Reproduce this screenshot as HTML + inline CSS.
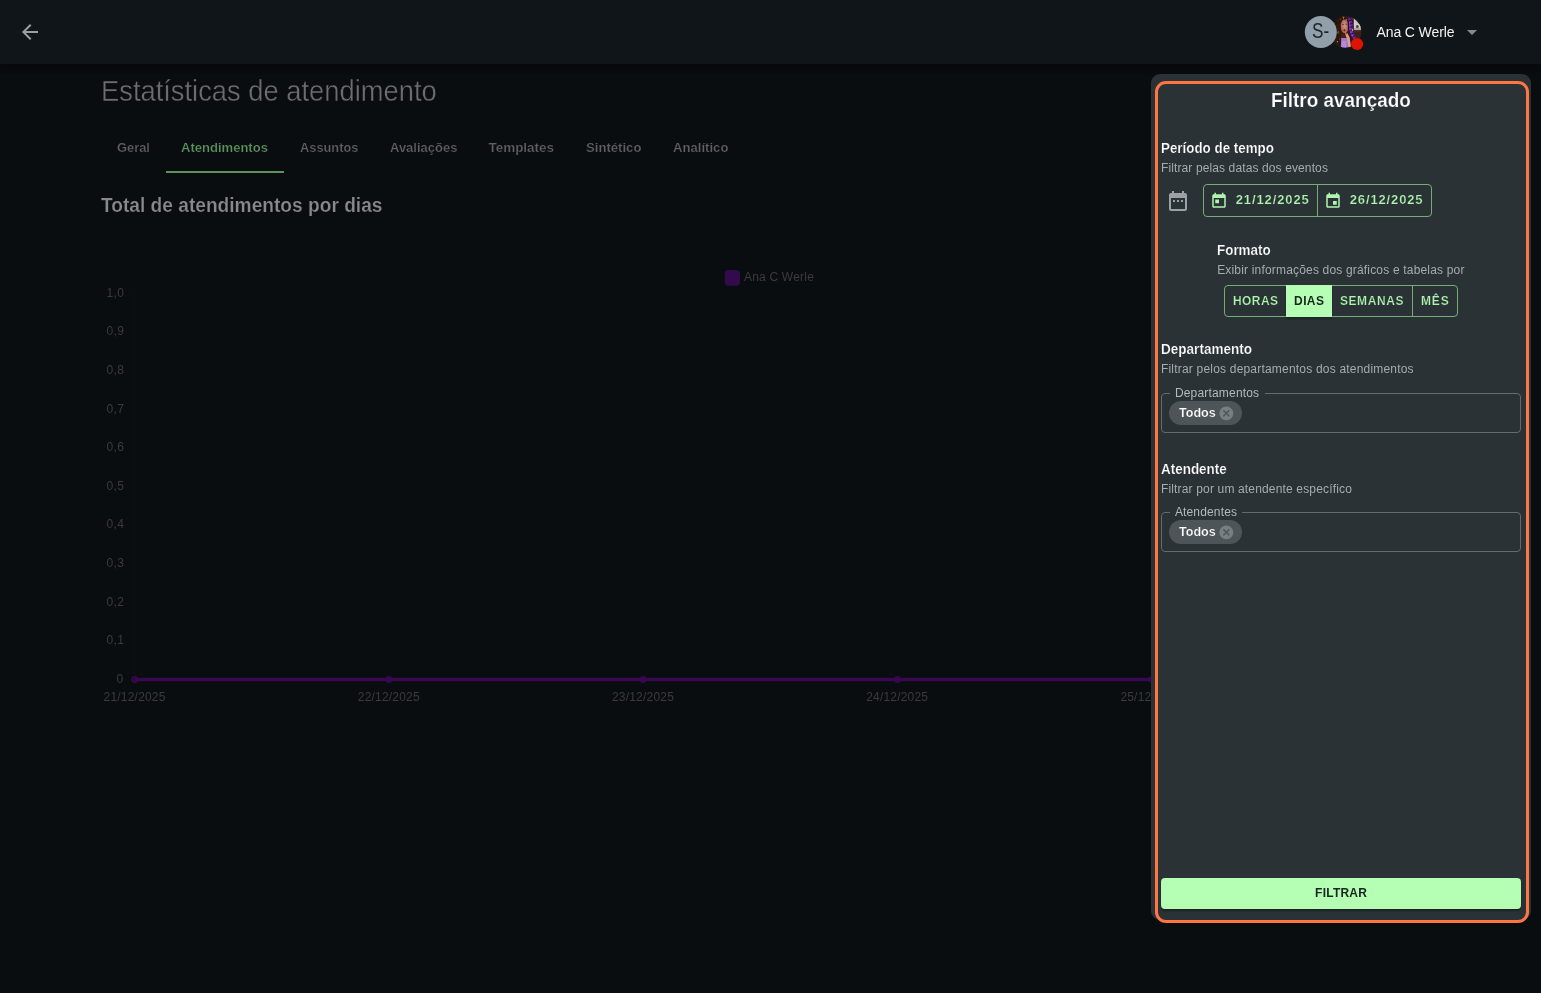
<!DOCTYPE html>
<html lang="pt-BR"><head><meta charset="utf-8"><title>Estatísticas de atendimento</title>
<style>
html,body{margin:0;padding:0}
body{width:1541px;height:993px;overflow:hidden;background:#0a0d10;font-family:"Liberation Sans", sans-serif;position:relative}
.abs{position:absolute}
.lay{left:0;top:0;width:1541px;height:993px;will-change:transform}
.t{position:absolute;white-space:nowrap;line-height:1;transform-origin:0 0}
.topbar{left:0;top:0;width:1541px;height:64px;background:#10151a;box-shadow:0 2px 4px -1px rgba(0,0,0,.2),0 4px 5px 0 rgba(0,0,0,.14),0 1px 10px 0 rgba(0,0,0,.12)}
.card{left:1151px;top:74px;width:380px;height:846px;background:#2a3236;border-radius:9px}
.ring{left:1155px;top:81px;width:368px;height:836px;border:3px solid #ff7643;border-radius:11px}
.grp{border:1px solid #74ad76;border-radius:4px;box-sizing:border-box}
.div{background:#74ad76;width:1px}
.field{border:1px solid #646b6e;border-radius:4px;box-sizing:border-box}
.gap{background:#2a3236;height:3px}
.chip{background:#4e5558;border-radius:12px;height:24px;width:73px}
.btn{left:1161px;top:878px;width:360px;height:31px;background:#b4ffb4;border-radius:4px;box-shadow:0 2px 2px rgba(0,0,0,.35)}
</style></head><body>
<div class="abs topbar"></div>
<svg class="abs" style="left:18px;top:20px" width="24" height="24" viewBox="0 0 24 24"><path fill="#9b9fa1" d="M20 11H7.83l5.59-5.59L12 4l-8 8 8 8 1.41-1.41L7.83 13H20v-2z"/></svg>
<!-- avatars -->
<svg class="abs" style="left:1300px;top:12px" width="70" height="42" viewBox="0 0 70 42">
<defs><clipPath id="av"><circle cx="45.600" cy="19.900" r="15.600"/></clipPath>
<radialGradient id="face" cx="0.5" cy="0.45" r="0.5"><stop offset="0" stop-color="#d0958a"/><stop offset="1" stop-color="#a86150"/></radialGradient></defs>
<g clip-path="url(#av)">
<rect x="30" y="4" width="32" height="32" fill="#3b2216"/>
<rect x="50.8" y="4" width="2.8" height="15" fill="#5e321f"/>
<rect x="53.8" y="6" width="9" height="12.2" fill="#a9a6a3"/>
<path d="M54 7l4 5 3-1 1 5h-8z" fill="#cfcdca"/>
<circle cx="57.3" cy="14.6" r="1.5" fill="#4d4844"/>
<rect x="53.8" y="18.2" width="9" height="8" fill="#3a2119"/>
<rect x="53.8" y="18.2" width="9" height="1.2" fill="#5a3322"/>
<rect x="52" y="26" width="11" height="10" fill="#2a1712"/>
<path d="M30 36V10c3-4 8-6.500 13-6.500 5 0 8 1.500 10 5l1 18-3 9.500z" fill="#2e190f"/>
<ellipse cx="44.700" cy="14.300" rx="3.900" ry="7" fill="url(#face)"/>
<path d="M41.500 21.200l5.800.5.500 4.600h-6.800z" fill="#4a2015"/>
<path d="M41.200 26h6.700l.400 10.500h-7.600z" fill="#a376cd"/>
<path d="M42 29h4v7.500h-4.500z" fill="#b58ad8"/>
<path d="M47.600 5.500c2.800 2 3.800 6 3.600 10.500s1.600 8 3.600 10.500" stroke="#6a1fb4" stroke-width="3.200" fill="none"/>
<path d="M48.600 8c1.600 3 1.200 7 1.600 10s2 6 3.600 8" stroke="#a04cf0" stroke-width="1.100" fill="none"/>
<path d="M47.300 6.500c1.500 3 1 8 1.200 11" stroke="#1c0d12" stroke-width="1.200" fill="none"/>
<path d="M47.600 5.500c2.800 2 3.800 6 3.600 10.500s1.600 8 3.600 10.500" stroke="#1c0d12" stroke-width="3.200" stroke-dasharray="1.200 2.100" fill="none" opacity=".75"/>
<circle cx="52.500" cy="18" r=".8" fill="#f0d8f5"/>
<path d="M44.700 20.600l2.600.3 2.400 4.600 1.500 11h-2.700l-1.300-9z" fill="#d79d8f"/>
<circle cx="44.400" cy="18.300" r="1" fill="#8c0f1a"/>
<circle cx="46.200" cy="21.800" r=".7" fill="#b3121f"/>
<path d="M42.300 12.500h1.600M45.500 12.300h1.600" stroke="#4a2a2a" stroke-width=".8"/>
<path d="M38 4.500c-3 .5-5.500 2-7 4.500" stroke="#d79a50" stroke-width="1.200" fill="none"/>
<circle cx="35.4" cy="10.5" r="0.52" fill="#6b3d22"/><circle cx="39.9" cy="8.8" r="0.53" fill="#160b08"/><circle cx="37.1" cy="7.1" r="0.69" fill="#160b08"/><circle cx="34.7" cy="22.5" r="0.87" fill="#b9753f"/><circle cx="33.6" cy="12.7" r="0.76" fill="#6b3d22"/><circle cx="33.1" cy="23.6" r="0.94" fill="#b9753f"/><circle cx="32.9" cy="31.8" r="0.69" fill="#d59a5c"/><circle cx="37.4" cy="23.1" r="0.87" fill="#160b08"/><circle cx="34.1" cy="23.4" r="0.58" fill="#6b3d22"/><circle cx="33.4" cy="27.4" r="0.53" fill="#160b08"/><circle cx="34.4" cy="26.4" r="0.85" fill="#160b08"/><circle cx="36.7" cy="33.7" r="0.63" fill="#d59a5c"/><circle cx="39.6" cy="27.0" r="0.54" fill="#8a5230"/><circle cx="35.2" cy="20.9" r="0.83" fill="#d59a5c"/><circle cx="35.1" cy="35.4" r="0.73" fill="#b9753f"/><circle cx="34.0" cy="16.3" r="0.69" fill="#160b08"/><circle cx="37.5" cy="29.7" r="0.65" fill="#d59a5c"/><circle cx="35.7" cy="20.9" r="0.53" fill="#160b08"/><circle cx="33.3" cy="14.1" r="0.80" fill="#6b3d22"/><circle cx="33.0" cy="27.0" r="0.76" fill="#6b3d22"/><circle cx="38.6" cy="19.4" r="0.67" fill="#6b3d22"/><circle cx="38.5" cy="6.7" r="0.66" fill="#160b08"/><circle cx="38.0" cy="20.8" r="0.85" fill="#8a5230"/><circle cx="33.7" cy="13.4" r="0.91" fill="#160b08"/><circle cx="37.0" cy="11.0" r="0.75" fill="#160b08"/><circle cx="40.5" cy="30.6" r="0.63" fill="#160b08"/><circle cx="36.2" cy="16.8" r="0.93" fill="#160b08"/><circle cx="33.9" cy="11.3" r="0.80" fill="#8a5230"/><circle cx="32.6" cy="30.9" r="0.62" fill="#8a5230"/><circle cx="32.5" cy="18.6" r="0.77" fill="#d59a5c"/><circle cx="35.4" cy="9.8" r="0.93" fill="#160b08"/><circle cx="38.4" cy="28.2" r="0.90" fill="#160b08"/><circle cx="39.5" cy="32.2" r="0.68" fill="#160b08"/><circle cx="42.2" cy="4.9" r="0.52" fill="#160b08"/><circle cx="39.5" cy="5.3" r="0.54" fill="#160b08"/><circle cx="43.8" cy="4.9" r="0.71" fill="#160b08"/><circle cx="46.6" cy="7.0" r="0.85" fill="#b9753f"/><circle cx="43.9" cy="5.1" r="0.88" fill="#6b3d22"/><circle cx="43.8" cy="6.4" r="0.84" fill="#b9753f"/><circle cx="46.9" cy="6.4" r="0.62" fill="#160b08"/><circle cx="40.2" cy="7.5" r="0.69" fill="#6b3d22"/><circle cx="44.5" cy="6.6" r="0.88" fill="#160b08"/><circle cx="43.2" cy="5.1" r="0.80" fill="#b9753f"/>
</g>
<circle cx="20.800" cy="20" r="16" fill="#919fab"/>
<circle cx="57.100" cy="32" r="6.100" fill="#e01200"/>
</svg>
<svg class="abs" style="left:1467px;top:30px" width="10" height="5" viewBox="0 0 10 5"><path d="M0 0h10L5 5z" fill="#858b8f"/></svg>
<!-- tab underline -->
<div class="abs" style="left:166px;top:171px;width:118px;height:2px;background:#5b935d"></div>
<svg class="abs" style="left:0;top:0" width="1541" height="993" viewBox="0 0 1541 993">
<rect x="134" y="292" width="1" height="392" fill="#0c1013"/>
<circle cx="134.7" cy="679.5" r="3" fill="#250a36" stroke="#44085f" stroke-width="1"/><circle cx="388.9" cy="679.5" r="3" fill="#250a36" stroke="#44085f" stroke-width="1"/><circle cx="643.1" cy="679.5" r="3" fill="#250a36" stroke="#44085f" stroke-width="1"/><circle cx="897.3" cy="679.5" r="3" fill="#250a36" stroke="#44085f" stroke-width="1"/><circle cx="1151.5" cy="679.5" r="3" fill="#250a36" stroke="#44085f" stroke-width="1"/>
<rect x="134.7" y="677.8" width="1020" height="3.4" fill="#3a0752"/>
<rect x="724.8" y="270.1" width="15.2" height="15.6" rx="4" fill="#330a4b"/>
</svg>
<div class="abs lay"><span class="t" style="top:270.84px;font-size:12px;color:#393b3d;left:743.98px;letter-spacing:0.203px;">Ana C Werle</span>
<span class="t" style="top:286.74px;font-size:12px;color:#393b3d;left:106.38px;letter-spacing:0.426px;">1,0</span>
<span class="t" style="top:325.34px;font-size:12px;color:#393b3d;left:106.38px;letter-spacing:0.426px;">0,9</span>
<span class="t" style="top:363.94px;font-size:12px;color:#393b3d;left:106.38px;letter-spacing:0.426px;">0,8</span>
<span class="t" style="top:402.54px;font-size:12px;color:#393b3d;left:106.38px;letter-spacing:0.426px;">0,7</span>
<span class="t" style="top:441.14px;font-size:12px;color:#393b3d;left:106.38px;letter-spacing:0.426px;">0,6</span>
<span class="t" style="top:479.74px;font-size:12px;color:#393b3d;left:106.38px;letter-spacing:0.426px;">0,5</span>
<span class="t" style="top:518.34px;font-size:12px;color:#393b3d;left:106.38px;letter-spacing:0.426px;">0,4</span>
<span class="t" style="top:556.94px;font-size:12px;color:#393b3d;left:106.38px;letter-spacing:0.426px;">0,3</span>
<span class="t" style="top:595.54px;font-size:12px;color:#393b3d;left:106.38px;letter-spacing:0.426px;">0,2</span>
<span class="t" style="top:634.14px;font-size:12px;color:#393b3d;left:106.38px;letter-spacing:0.426px;">0,1</span>
<span class="t" style="top:672.74px;font-size:12px;color:#393b3d;left:116.38px;">0</span>
<span class="t" style="top:690.74px;font-size:12px;color:#393b3d;left:103.58px;letter-spacing:0.198px;">21/12/2025</span>
<span class="t" style="top:690.74px;font-size:12px;color:#393b3d;left:357.78px;letter-spacing:0.198px;">22/12/2025</span>
<span class="t" style="top:690.74px;font-size:12px;color:#393b3d;left:611.98px;letter-spacing:0.198px;">23/12/2025</span>
<span class="t" style="top:690.74px;font-size:12px;color:#393b3d;left:866.18px;letter-spacing:0.198px;">24/12/2025</span>
<span class="t" style="top:690.74px;font-size:12px;color:#393b3d;left:1120.38px;letter-spacing:0.198px;">25/12/2025</span></div>
<span class="t" style="top:76.33px;font-size:29.5px;color:#6c6d6e;left:100.74px;transform:scaleX(0.9263);-webkit-text-stroke:0.4px #0a0d10;">Estatísticas de atendimento</span>
<span class="t" style="top:140.77px;font-size:13.5px;color:#5e6062;font-weight:700;left:116.55px;transform:scaleX(0.9528);-webkit-text-stroke:0.22px #0a0d10;">Geral</span>
<span class="t" style="top:140.77px;font-size:13.5px;color:#5b935d;font-weight:700;left:181.04px;transform:scaleX(0.9655);-webkit-text-stroke:0.22px #0a0d10;">Atendimentos</span>
<span class="t" style="top:140.77px;font-size:13.5px;color:#5e6062;font-weight:700;left:299.55px;transform:scaleX(0.9493);-webkit-text-stroke:0.22px #0a0d10;">Assuntos</span>
<span class="t" style="top:140.77px;font-size:13.5px;color:#5e6062;font-weight:700;left:389.55px;transform:scaleX(0.9623);-webkit-text-stroke:0.22px #0a0d10;">Avaliações</span>
<span class="t" style="top:140.77px;font-size:13.5px;color:#5e6062;font-weight:700;left:488.53px;letter-spacing:-0.042px;-webkit-text-stroke:0.22px #0a0d10;">Templates</span>
<span class="t" style="top:140.77px;font-size:13.5px;color:#5e6062;font-weight:700;left:585.54px;transform:scaleX(0.9720);-webkit-text-stroke:0.22px #0a0d10;">Sintético</span>
<span class="t" style="top:140.77px;font-size:13.5px;color:#5e6062;font-weight:700;left:672.54px;transform:scaleX(0.9720);-webkit-text-stroke:0.22px #0a0d10;">Analítico</span>
<span class="t" style="top:195.07px;font-size:20px;color:#87898a;font-weight:700;left:100.83px;transform:scaleX(0.9569);-webkit-text-stroke:0.22px #0a0d10;">Total de atendimentos por dias</span>
<!-- panel -->
<div class="abs card"></div>
<div class="abs ring"></div>
<svg class="abs" style="left:1166px;top:189px" width="24" height="24" viewBox="0 0 24 24"><path fill="#9da1a3" d="M9 11H7v2h2v-2zm4 0h-2v2h2v-2zm4 0h-2v2h2v-2zm2-7h-1V2h-2v2H8V2H6v2H5c-1.11 0-1.99.9-1.99 2L3 20c0 1.1.89 2 2 2h14c1.1 0 2-.9 2-2V6c0-1.1-.9-2-2-2zm0 16H5V9h14v11z"/></svg>
<div class="abs grp" style="left:1203px;top:184px;width:229px;height:33px"></div>
<div class="abs div" style="left:1317px;top:185px;height:31px"></div>
<svg class="abs" style="left:1210px;top:192px" width="18" height="18" viewBox="0 0 24 24"><path fill="#aef5ae" d="M19 3h-1V1h-2v2H8V1H6v2H5c-1.11 0-1.99.9-1.99 2L3 19c0 1.1.89 2 2 2h14c1.1 0 2-.9 2-2V5c0-1.1-.9-2-2-2zm0 16H5V8h14v11zM7 10h5v5H7z"/></svg>
<svg class="abs" style="left:1324px;top:192px" width="18" height="18" viewBox="0 0 24 24"><path fill="#aef5ae" d="M17 12h-5v5h5v-5zM16 1v2H8V1H6v2H5c-1.11 0-1.99.9-1.99 2L3 19c0 1.1.89 2 2 2h14c1.1 0 2-.9 2-2V5c0-1.1-.9-2-2-2h-1V1h-2zm3 18H5V8h14v11z"/></svg>
<div class="abs grp" style="left:1224px;top:285px;width:234px;height:32px"></div>
<div class="abs" style="left:1286px;top:285px;width:46px;height:32px;background:#b4ffb4;box-shadow:0 2px 2px rgba(0,0,0,.3)"></div>
<div class="abs div" style="left:1412px;top:286px;height:30px"></div>
<div class="abs field" style="left:1161px;top:393px;width:360px;height:40px"></div>
<div class="abs gap" style="left:1170px;top:392px;width:95px"></div>
<div class="abs chip" style="left:1169px;top:401px"></div>
<svg class="abs" style="left:1217.7px;top:404.9px" width="16.7" height="16.7" viewBox="0 0 24 24"><path fill="#787e81" d="M12 2C6.47 2 2 6.47 2 12s4.47 10 10 10 10-4.47 10-10S17.53 2 12 2zm5 13.59L15.590 17 12 13.410 8.410 17 7 15.590 10.590 12 7 8.410 8.410 7 12 10.590 15.590 7 17 8.410 13.410 12 17 15.590z"/></svg>
<div class="abs field" style="left:1161px;top:512px;width:360px;height:40px"></div>
<div class="abs gap" style="left:1170px;top:511px;width:72px"></div>
<div class="abs chip" style="left:1169px;top:520px"></div>
<svg class="abs" style="left:1217.7px;top:523.7px" width="16.7" height="16.7" viewBox="0 0 24 24"><path fill="#787e81" d="M12 2C6.47 2 2 6.47 2 12s4.47 10 10 10 10-4.47 10-10S17.53 2 12 2zm5 13.59L15.590 17 12 13.410 8.410 17 7 15.590 10.590 12 7 8.410 8.410 7 12 10.590 15.590 7 17 8.410 13.410 12 17 15.590z"/></svg>
<div class="abs btn"></div>
<div class="abs lay"><span class="t" style="top:24.65px;font-size:14px;color:#f2f3f3;left:1376.51px;letter-spacing:-0.113px;">Ana C Werle</span>
<span class="t" style="top:20.70px;font-size:21.5px;color:#1d2327;left:1312.40px;transform:scaleX(0.8002);">S-</span>
<span class="t" style="top:90.05px;font-size:20.5px;color:#ffffff;font-weight:700;left:1271.04px;transform:scaleX(0.9228);-webkit-text-stroke:0.22px #2a3236;">Filtro avançado</span>
<span class="t" style="top:140.95px;font-size:14px;color:#ffffff;font-weight:700;left:1160.93px;transform:scaleX(0.9552);-webkit-text-stroke:0.22px #2a3236;">Período de tempo</span>
<span class="t" style="top:161.84px;font-size:12px;color:#a6abad;left:1160.98px;letter-spacing:0.117px;">Filtrar pelas datas dos eventos</span>
<span class="t" style="top:193.30px;font-size:13px;color:#aef5ae;font-weight:700;left:1235.75px;letter-spacing:0.892px;-webkit-text-stroke:0.22px #2a3236;">21/12/2025</span>
<span class="t" style="top:193.30px;font-size:13px;color:#aef5ae;font-weight:700;left:1349.75px;letter-spacing:0.859px;-webkit-text-stroke:0.22px #2a3236;">26/12/2025</span>
<span class="t" style="top:243.15px;font-size:14px;color:#ffffff;font-weight:700;left:1217.13px;transform:scaleX(0.9578);-webkit-text-stroke:0.22px #2a3236;">Formato</span>
<span class="t" style="top:264.04px;font-size:12px;color:#a6abad;left:1217.18px;letter-spacing:0.177px;">Exibir informações dos gráficos e tabelas por</span>
<span class="t" style="top:294.74px;font-size:12px;color:#aef5ae;font-weight:700;left:1232.98px;letter-spacing:0.424px;-webkit-text-stroke:0.22px #2a3236;">HORAS</span>
<span class="t" style="top:294.74px;font-size:12px;color:#1a2420;font-weight:700;left:1294.08px;letter-spacing:0.389px;">DIAS</span>
<span class="t" style="top:294.74px;font-size:12px;color:#aef5ae;font-weight:700;left:1339.88px;letter-spacing:0.621px;-webkit-text-stroke:0.22px #2a3236;">SEMANAS</span>
<span class="t" style="top:294.74px;font-size:12px;color:#aef5ae;font-weight:700;left:1420.88px;letter-spacing:0.912px;-webkit-text-stroke:0.22px #2a3236;">MÊS</span>
<span class="t" style="top:342.45px;font-size:14px;color:#ffffff;font-weight:700;left:1160.93px;transform:scaleX(0.9671);-webkit-text-stroke:0.22px #2a3236;">Departamento</span>
<span class="t" style="top:363.04px;font-size:12px;color:#a6abad;left:1160.98px;letter-spacing:0.198px;">Filtrar pelos departamentos dos atendimentos</span>
<span class="t" style="top:387.04px;font-size:12px;color:#b4b9bb;left:1174.88px;letter-spacing:0.183px;">Departamentos</span>
<span class="t" style="top:405.80px;font-size:13px;color:#ffffff;font-weight:700;left:1178.96px;transform:scaleX(0.9671);-webkit-text-stroke:0.22px #4e5558;">Todos</span>
<span class="t" style="top:462.45px;font-size:14px;color:#ffffff;font-weight:700;left:1160.93px;transform:scaleX(0.9604);-webkit-text-stroke:0.22px #2a3236;">Atendente</span>
<span class="t" style="top:483.04px;font-size:12px;color:#a6abad;left:1160.98px;letter-spacing:0.159px;">Filtrar por um atendente específico</span>
<span class="t" style="top:506.04px;font-size:12px;color:#b4b9bb;left:1174.88px;letter-spacing:0.158px;">Atendentes</span>
<span class="t" style="top:524.80px;font-size:13px;color:#ffffff;font-weight:700;left:1178.96px;transform:scaleX(0.9671);-webkit-text-stroke:0.22px #4e5558;">Todos</span>
<span class="t" style="top:887.24px;font-size:12px;color:#1a2420;font-weight:700;left:1315.08px;letter-spacing:0.234px;">FILTRAR</span></div>
</body></html>
